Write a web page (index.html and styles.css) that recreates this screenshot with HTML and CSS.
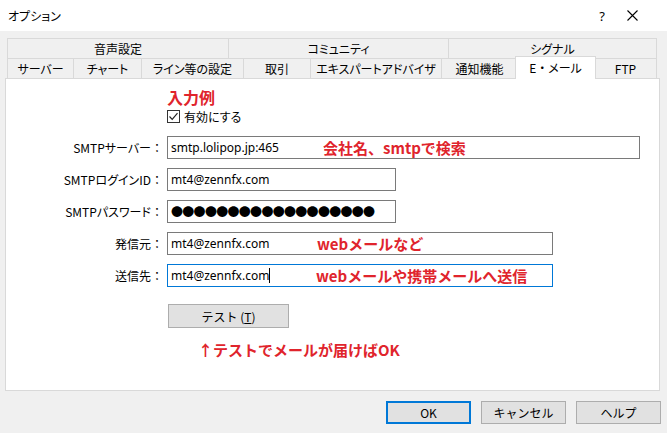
FILE: index.html
```html
<!DOCTYPE html>
<html lang="ja">
<head>
    <meta charset="UTF-8">
    <title>オプション</title>
    <link rel="stylesheet" href="styles.css">
</head>
<body>
    <div class="titlebar">
        <span class="title">オプション</span>
        <span class="help">?</span>
        <span class="close">
            <svg width="11" height="11" viewBox="0 0 11 11"><path d="M0.5 0.5 L10.5 10.5 M10.5 0.5 L0.5 10.5" stroke="#000" stroke-width="1.1" fill="none"/></svg>
        </span>
    </div>

    <div class="tabs">
        <div class="tab-row upper">
            <div class="tab">音声設定</div>
            <div class="tab">コミュニティ</div>
            <div class="tab">シグナル</div>
        </div>
        <div class="tab-row lower">
            <div class="tab">サーバー</div>
            <div class="tab">チャート</div>
            <div class="tab">ライン等の設定</div>
            <div class="tab">取引</div>
            <div class="tab">エキスパートアドバイザ</div>
            <div class="tab">通知機能</div>
            <div class="tab active">E<span class="wide-dot">・</span>メール</div>
            <div class="tab">FTP</div>
        </div>
    </div>

    <div class="panel">
        <div class="example">入力例</div>
        <label class="check">
            <span class="box">
                <svg width="11" height="11" viewBox="0 0 11 11"><path d="M1.5 5.5 L4.2 8.3 L9.5 2.2" stroke="#222" stroke-width="1.2" fill="none"/></svg>
            </span>
            有効にする
        </label>

        <div class="form">
            <span class="label">SMTPサーバー<span class="colon">：</span></span>
            <div class="field wide">smtp.lolipop.jp:465<span class="annot at-server">会社名、smtpで検索</span></div>

            <span class="label">SMTPログインID<span class="colon">：</span></span>
            <div class="field short">mt4@zennfx.com</div>

            <span class="label">SMTPパスワード<span class="colon">：</span></span>
            <div class="field short"><span class="dots">●●●●●●●●●●●●●●●●●●</span></div>

            <span class="label">発信元<span class="colon">：</span></span>
            <div class="field mid">mt4@zennfx.com<span class="annot at-from">webメールなど</span></div>

            <span class="label">送信先<span class="colon">：</span></span>
            <div class="field mid focus">mt4@zennfx.com<span class="caret"></span><span class="annot at-to">webメールや携帯メールへ送信</span></div>
        </div>

        <button class="test">テスト (<u>T</u>)</button>
        <div class="note">↑テストでメールが届けばOK</div>
    </div>

    <div class="actions">
        <button class="btn default">OK</button>
        <button class="btn">キャンセル</button>
        <button class="btn">ヘルプ</button>
    </div>
</body>
</html>
```

FILE: styles.css
```css
body {
    margin: 0;
    width: 667px;
    height: 433px;
    overflow: hidden;
    background-color: #f0f0f0;
    font-family: "Noto Sans CJK JP", "Noto Sans", sans-serif;
    font-size: 12px;
    font-feature-settings: "palt";
    color: #000;
}

.titlebar {
    height: 31px;
    background-color: #fff;
    display: flex;
    align-items: center;
    padding: 0 29px 0 8px;
}

.title {
    flex: 1;
}

.help {
    width: 14px;
    text-align: center;
    font-family: "Noto Sans", sans-serif;
    font-size: 13px;
    margin-right: 18px;
}

.close {
    display: flex;
}

.tabs {
    margin: 7px 0 0 7px;
    width: 650px;
}

.tab-row {
    display: grid;
    height: 20px;
}

.tab-row.upper {
    grid-template-columns: 221px 220px 209px;
}

.tab-row.lower {
    grid-template-columns: 66px 68px 102px 67px 131px 76px 77px 63px;
}

.tab {
    box-sizing: border-box;
    border-top: 1px solid #d9d9d9;
    border-left: 1px solid #d9d9d9;
    display: flex;
    align-items: center;
    justify-content: center;
    line-height: 1;
    white-space: nowrap;
}

.tab:last-child {
    border-right: 1px solid #d9d9d9;
}

.tab.active {
    background-color: #fff;
    border-right: 1px solid #d9d9d9;
    margin: -2px -2px -1px;
    position: relative;
    z-index: 1;
}

.wide-dot {
    font-feature-settings: normal;
}

.panel {
    margin-left: 5px;
    width: 655px;
    height: 313px;
    box-sizing: border-box;
    border: 1px solid #d9d9d9;
    background-color: #fff;
}

.example {
    margin: 8px 0 0 161px;
    color: #e0242c;
    font-weight: bold;
    font-size: 16px;
    line-height: 20px;
    font-feature-settings: normal;
}

.check {
    margin: 1px 0 0 161px;
    height: 16px;
    display: flex;
    align-items: center;
    gap: 4px;
}

.check .box {
    width: 13px;
    height: 13px;
    box-sizing: border-box;
    border: 1px solid #333;
    display: flex;
    align-items: center;
    justify-content: center;
}

.form {
    margin-top: 12px;
    display: grid;
    grid-template-columns: 155px auto;
    column-gap: 6px;
    row-gap: 9px;
    align-items: center;
    justify-items: start;
}

.label {
    justify-self: end;
    white-space: nowrap;
}

.colon {
    font-feature-settings: normal;
    margin-right: -2px;
}

.field {
    position: relative;
    height: 23px;
    box-sizing: border-box;
    border: 1px solid #7a7a7a;
    padding-left: 3px;
    display: flex;
    align-items: center;
    font-family: "Noto Sans", "Noto Sans CJK JP", sans-serif;
    white-space: nowrap;
}

.field.wide {
    width: 473px;
}

.field.short {
    width: 229px;
}

.field.mid {
    width: 386px;
}

.field.focus {
    border-color: #0078d7;
}

.caret {
    width: 1px;
    height: 15px;
    background-color: #000;
}

.dots {
    font-family: "Noto Sans CJK JP", sans-serif;
    font-size: 12px;
    font-feature-settings: normal;
    letter-spacing: -0.7px;
}

.annot {
    position: absolute;
    top: 0;
    line-height: 21px;
    color: #e0242c;
    font-family: "Noto Sans CJK JP", sans-serif;
    font-weight: bold;
    font-size: 15px;
    font-feature-settings: normal;
}

.at-server {
    left: 155px;
}

.at-from {
    left: 149px;
}

.at-to {
    left: 148px;
}

.test {
    display: block;
    margin: 17px 0 0 162px;
    width: 121px;
    height: 24px;
    background-color: #e1e1e1;
    border: 1px solid #adadad;
    font-family: inherit;
    font-size: 12px;
    padding: 0;
}

.note {
    margin: 12px 0 0 192px;
    color: #e0242c;
    font-weight: bold;
    font-size: 15px;
    line-height: 20px;
    font-feature-settings: normal;
}

.actions {
    margin-top: 10px;
    padding-right: 6px;
    display: flex;
    justify-content: flex-end;
    gap: 10px;
}

.btn {
    width: 85px;
    height: 23px;
    box-sizing: border-box;
    background-color: #e1e1e1;
    border: 1px solid #adadad;
    font-family: inherit;
    font-size: 12px;
    padding: 0;
}

.btn.default {
    border: 2px solid #0078d7;
}
```
